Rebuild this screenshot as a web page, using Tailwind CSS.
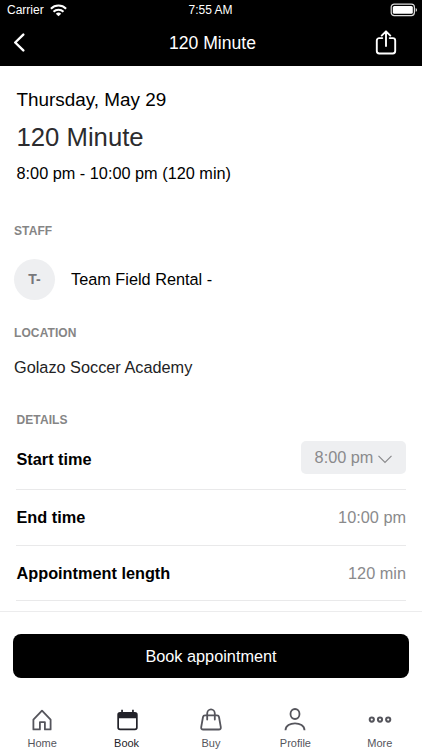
<!DOCTYPE html>
<html lang="en">
<head>
<meta charset="utf-8">
<title>120 Minute</title>
<script src="https://cdn.jsdelivr.net/npm/@tailwindcss/browser@4"></script>
</head>
<body class="bg-white">
<div class="flex h-[750px] w-[422px] flex-col overflow-hidden bg-white font-['Liberation_Sans',Arial,sans-serif] text-black">
  <header class="h-[66px] shrink-0 bg-black text-white">
    <div class="grid h-5 grid-cols-3 items-center pr-[5px] pl-[7px] text-[12px]">
      <div class="flex items-center gap-[6px]">
        <span class="text-[12px]">Carrier</span>
        <svg class="h-[13px] w-[17px]" viewBox="0 0 17 13" fill="none" stroke="white" stroke-width="2"><path d="M.9 4.7a10.8 10.8 0 0 1 15.2 0M3.5 7.7a7.1 7.1 0 0 1 10 0"/><path d="M8.5 12.3 5.8 9.8a4 4 0 0 1 5.4 0z" fill="white" stroke="none"/></svg>
      </div>
      <span class="pr-[3px] text-center whitespace-nowrap">7:55 AM</span>
      <svg class="h-[14px] w-[28px] justify-self-end" viewBox="0 0 28 14"><rect x="2.2" y="1.1" width="23.2" height="11.5" rx="3" fill="none" stroke="#ddd" stroke-width="1.2"/><rect x="3.8" y="2.9" width="20" height="7.9" rx="1.5" fill="white"/><path d="M26.7 5q1.3.4 1.3 1.9t-1.3 1.9z" fill="#ddd"/></svg>
    </div>
    <div class="grid h-[46px] grid-cols-[48px_1fr_48px] items-center">
      <svg class="ml-[13px] h-[20px] w-[13px]" viewBox="0 0 13 20" fill="none" stroke="white" stroke-width="2.4" stroke-linecap="round" stroke-linejoin="round"><path d="M10.3 1.6 2.2 9.5l8.1 7.9"/></svg>
      <h1 class="pl-[3px] text-center text-[17.6px]">120 Minute</h1>
      <svg class="ml-px h-[26px] w-[22px]" viewBox="0 0 22 26" fill="none" stroke="white" stroke-width="1.9" stroke-linecap="round" stroke-linejoin="round"><path d="M7.3 8.1H4.2a2.4 2.4 0 0 0-2.4 2.4v10.6a2.4 2.4 0 0 0 2.4 2.4h13.6a2.4 2.4 0 0 0 2.4-2.4V10.5a2.4 2.4 0 0 0-2.4-2.4h-3.1M11 16V1.7M6.7 5.6 11 1.3l4.3 4.3"/></svg>
    </div>
  </header>

  <main class="h-[545px] shrink-0 overflow-hidden pt-[19px]">
    <section class="pl-[16.5px]">
      <p class="text-[18.9px] leading-[30px]">Thursday, May 29</p>
      <h2 class="pt-[2px] text-[25.7px] leading-[40px] text-[#2c2c2e]">120 Minute</h2>
      <p class="text-[16.3px] leading-[32px]">8:00 pm - 10:00 pm (120 min)</p>
    </section>

    <section class="pt-[32px] pl-[14px]">
      <h3 class="text-[12px] leading-[20px] font-bold tracking-[0.1px] text-[#858585]">STAFF</h3>
      <div class="flex items-center gap-[16px] pt-[18px]">
        <div class="flex h-[41px] w-[41px] items-center justify-center rounded-full bg-[#eeeff1] text-[14px] font-bold text-[#77777a]">T-</div>
        <span class="text-[16.3px]">Team Field Rental -</span>
      </div>
    </section>

    <section class="pt-[23px] pl-[14px]">
      <h3 class="text-[12px] leading-[20px] font-bold tracking-[0.1px] text-[#858585]">LOCATION</h3>
      <p class="pt-[9px] text-[16.3px] leading-[30px] text-[#222224]">Golazo Soccer Academy</p>
    </section>

    <section class="px-4 pt-[28px]">
      <h3 class="pl-[.5px] text-[12px] leading-[20px] font-bold tracking-[0.1px] text-[#858585]">DETAILS</h3>
      <dl class="text-[16.3px]">
        <div class="flex h-[60px] items-center justify-between border-b border-[#e9e9ea]">
          <dt class="pl-[.5px] font-bold">Start time</dt>
          <dd class="mb-[5px] flex h-[33px] w-[105px] items-center justify-center gap-[5px] rounded-[5px] bg-[#eeeff1] text-[#8a8a8c]">8:00 pm
            <svg class="mt-1 h-[9px] w-[14px]" viewBox="0 0 14 9" fill="none" stroke="#8a8a8c" stroke-width="1.2"><path d="M.5.9 7 7.5 13.5.9"/></svg>
          </dd>
        </div>
        <div class="flex h-[56px] items-center justify-between border-b border-[#e9e9ea]">
          <dt class="pl-[.5px] font-bold">End time</dt><dd class="text-[#8a8a8c]">10:00 pm</dd>
        </div>
        <div class="flex h-[55px] items-center justify-between border-b border-[#e9e9ea]">
          <dt class="pl-[.5px] font-bold">Appointment length</dt><dd class="text-[#8a8a8c]">120 min</dd>
        </div>
      </dl>
    </section>
  </main>

  <footer class="flex h-[139px] shrink-0 flex-col border-t border-[#ececed] bg-white pt-[22px]">
    <button class="mx-[13px] h-[44px] shrink-0 rounded-[8px] bg-black text-[16.3px] text-white">Book appointment</button>
    <nav class="grid grid-cols-5 pt-[28px] text-center text-[11px] leading-[14px] text-[#55555c]">
      <a class="flex flex-col items-center gap-[4px]">
        <svg class="h-[26px] w-[26px]" viewBox="0 0 26 26" fill="none" stroke="#55555c" stroke-width="1.8" stroke-linejoin="round"><path d="M4.4 23.4V13.7L13 4.6l8.6 9.100v9.700h-5.700v-7.200h-5v7.200z"/></svg>Home</a>
      <a class="flex flex-col items-center gap-[4px] text-[#222229]">
        <svg class="h-[26px] w-[26px]" viewBox="0 -.7 26 26"><path fill="#222229" fill-rule="evenodd" d="M7.2 3.100h1.700v2.200h9.200V3.100h1.700v2.200h1.100a2.8 2.8 0 0 1 2.8 2.8v12.7a2.8 2.8 0 0 1-2.8 2.8H6.1a2.8 2.8 0 0 1-2.8-2.8V8.1a2.8 2.8 0 0 1 2.8-2.8h1.1zM5 11.600v9.100q0 1.1 1.1 1.1h14.8q1.1 0 1.1-1.1v-9.1z"/></svg>Book</a>
      <a class="flex flex-col items-center gap-[4px]">
        <svg class="h-[26px] w-[26px]" viewBox="0 0 26 26" fill="none" stroke="#55555c" stroke-width="1.8" stroke-linecap="round" stroke-linejoin="round"><path d="M7 9.300h12q1.700 0 2 1.700l1.800 10.200q.3 2.300-2 2.300H5.200q-2.300 0-2-2.300L5 11q.3-1.700 2-1.700zM9.200 13.500V7.500a3.800 4.200 0 0 1 7.600 0v6"/></svg>Buy</a>
      <a class="flex flex-col items-center gap-[4px]">
        <svg class="h-[26px] w-[26px]" viewBox="0 -.3 26 26" fill="none" stroke="#55555c" stroke-width="1.800"><ellipse cx="13" cy="7.700" rx="4.500" ry="5"/><path d="M3.500 24c0-9.300 19-9.300 19 0"/></svg>Profile</a>
      <a class="flex flex-col items-center gap-[4px]">
        <svg class="h-[26px] w-[26px]" viewBox="0 -.6 26 26" fill="none" stroke="#55555c" stroke-width="2"><circle cx="4.800" cy="13" r="2.100"/><circle cx="13" cy="13" r="2.100"/><circle cx="21.200" cy="13" r="2.100"/></svg>More</a>
    </nav>
  </footer>
</div>
</body>
</html>
